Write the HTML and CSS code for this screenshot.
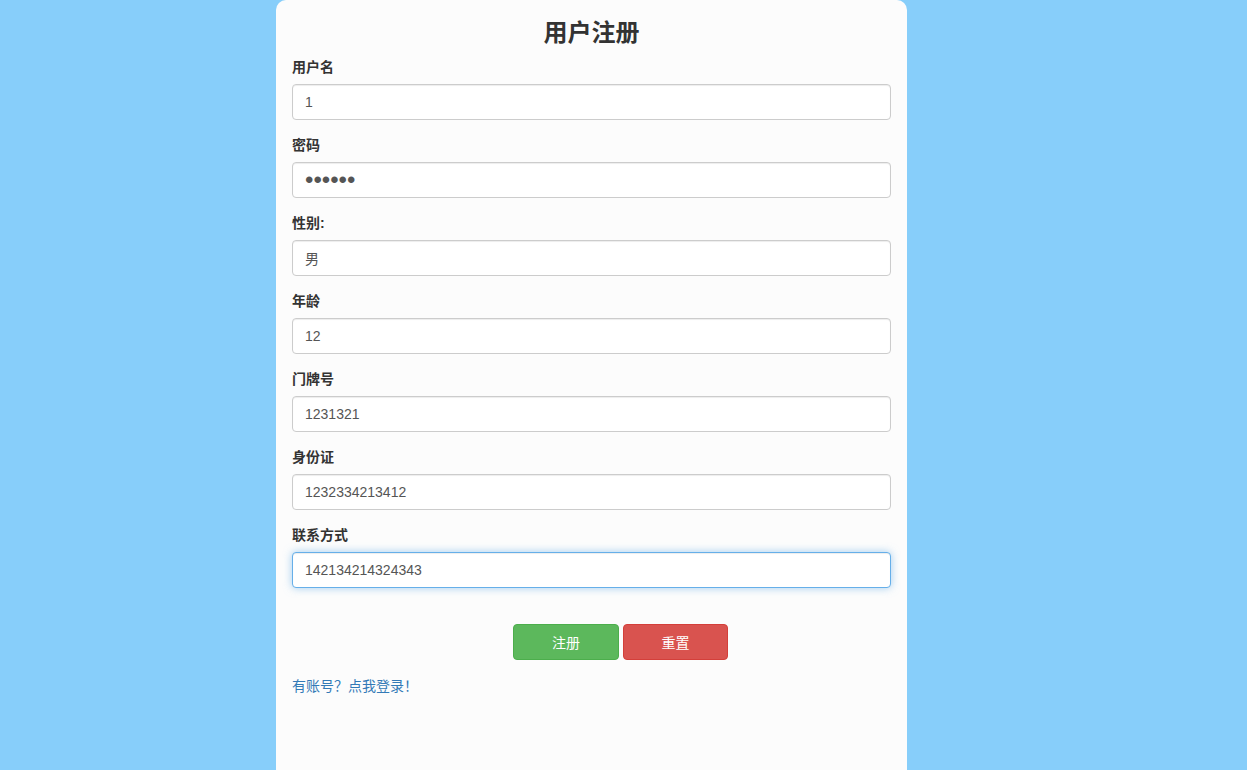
FILE: index.html
```html
<!DOCTYPE html>
<html lang="zh-CN">
<head>
<meta charset="utf-8">
<title>用户注册</title>
<link rel="stylesheet" href="styles.css">
</head>
<body>
<div class="panel">
  <h2 class="title">用户注册</h2>
  <form class="form">
    <div class="group">
      <label class="label">用户名</label>
      <input class="control" type="text" value="1">
    </div>
    <div class="group">
      <label class="label">密码</label>
      <input class="control secret" type="password" value="123456">
    </div>
    <div class="group">
      <label class="label">性别:</label>
      <input class="control" type="text" value="男">
    </div>
    <div class="group">
      <label class="label">年龄</label>
      <input class="control" type="text" value="12">
    </div>
    <div class="group">
      <label class="label">门牌号</label>
      <input class="control" type="text" value="1231321">
    </div>
    <div class="group">
      <label class="label">身份证</label>
      <input class="control" type="text" value="1232334213412">
    </div>
    <div class="group">
      <label class="label">联系方式</label>
      <input class="control focused" type="text" value="142134214324343">
    </div>
    <div class="actions">
      <button class="btn btn-green" type="button">注册</button>
      <button class="btn btn-red" type="button">重置</button>
    </div>
    <a class="link" href="#">有账号？点我登录！</a>
  </form>
</div>
</body>
</html>
```
FILE: styles.css
```css
html, body {
  margin: 0;
  padding: 0;
}
body {
  background: #87cefa;
  font-family: "Liberation Sans", Arial, "Noto Sans CJK SC", sans-serif;
  font-size: 14px;
  line-height: 20px;
  color: #333;
}
.panel {
  box-sizing: border-box;
  width: 631px;
  min-height: 770px;
  margin-left: 276px;
  padding: 0 16px;
  background: #fcfcfc;
  border-radius: 10px 10px 0 0;
}
.title {
  margin: 0;
  padding: 18px 0 9px;
  font-size: 24px;
  line-height: 30px;
  font-weight: bold;
  text-align: center;
  color: #333;
}
.form {
  display: flex;
  flex-direction: column;
}
.group {
  display: flex;
  flex-direction: column;
  margin-bottom: 15px;
}
.label {
  font-weight: bold;
  margin-bottom: 7px;
  line-height: 20px;
}
.control {
  box-sizing: border-box;
  width: 100%;
  height: 36px;
  padding: 6px 12px;
  font-family: "Liberation Sans", Arial, "Noto Sans CJK SC", sans-serif;
  font-size: 14px;
  color: #555;
  background: #fff;
  border: 1px solid #ccc;
  border-radius: 4px;
  box-shadow: inset 0 1px 1px rgba(0,0,0,.075);
  outline: none;
}
.control.secret {
  padding: 0 12px;
  font-size: 24px;
  line-height: 34px;
}
.control.focused {
  border-color: #66afe9;
  box-shadow: inset 0 1px 1px rgba(0,0,0,.075), 0 0 8px rgba(102,175,233,.6);
}
.actions {
  display: flex;
  gap: 4px;
  padding-left: 221px;
  margin-top: 21px;
}
.btn {
  box-sizing: border-box;
  width: 106px;
  height: 36px;
  font-family: "Liberation Sans", Arial, "Noto Sans CJK SC", sans-serif;
  font-size: 14px;
  color: #fff;
  border-radius: 4px;
  border: 1px solid transparent;
  cursor: pointer;
}
.btn-green {
  background: #5cb85c;
  border-color: #4cae4c;
}
.btn-red {
  width: 105px;
  background: #d9534f;
  border-color: #d43f3a;
}
.link {
  margin-top: 16px;
  color: #337ab7;
  text-decoration: none;
  align-self: flex-start;
}
```
